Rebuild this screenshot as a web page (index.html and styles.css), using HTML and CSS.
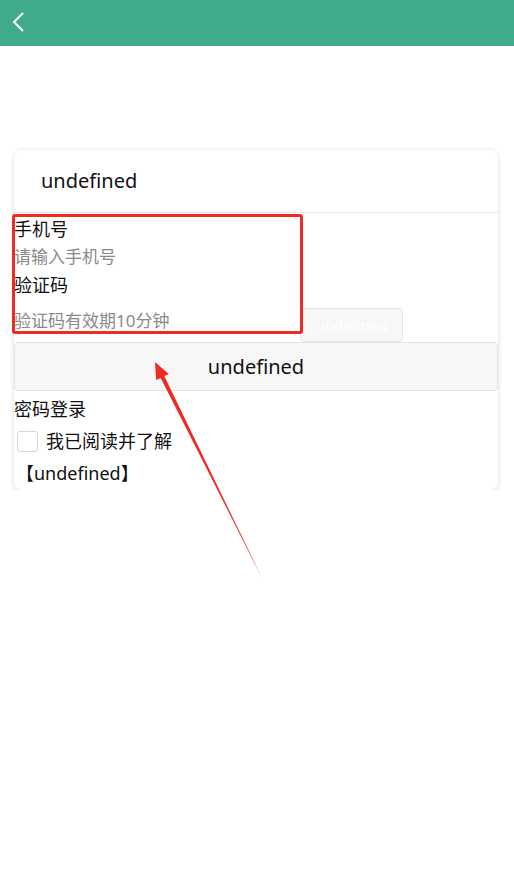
FILE: index.html
```html
<!DOCTYPE html>
<html lang="zh">
<head>
    <meta charset="UTF-8">
    <meta name="viewport" content="width=device-width, initial-scale=1.0">
    <title>登录</title>
    <link rel="stylesheet" href="styles.css">
</head>
<body>
    <div class="header">
        <svg class="back" width="16" height="22" viewBox="0 0 16 22">
            <polyline points="11,2 2,11 11,20" fill="none" stroke="#fff" stroke-width="2" />
        </svg>
    </div>
    <div class="card">
        <div class="card-title">undefined</div>
        <div class="label">手机号</div>
        <div class="input">请输入手机号</div>
        <div class="label">验证码</div>
        <div class="code-row">
            <div class="input code-input">验证码有效期10分钟</div>
            <button class="code-btn" type="button">undefined</button>
        </div>
        <button class="main-btn" type="button">undefined</button>
        <div class="link">密码登录</div>
        <div class="agree">
            <span class="check"></span>
            <span>我已阅读并了解</span>
        </div>
        <div class="terms">【undefined】</div>
    </div>
    <div class="mark"></div>
    <svg class="arrow" width="514" height="894" viewBox="0 0 514 894">
        <polygon points="155,362 168.8,373.9 164.3,376.1 262,578 160.7,377.9 156.2,380.1" fill="#ee2a22" />
    </svg>
</body>
</html>
```

FILE: styles.css
```css
body { margin: 0; background: #fff; color: #111; font-family: "Noto Sans", "Noto Sans CJK SC", sans-serif; }
.header { height: 46px; background: #40aa8c; display: flex; align-items: center; padding-left: 12px; }
.back { display: block; margin-top: -2px; }
.card { margin: 104px 16px 0 14px; background: #fff; border-radius: 8px; box-shadow: 0 1px 5px rgba(0, 0, 0, 0.16); padding-bottom: 4px; }
.card-title { height: 62px; line-height: 62px; padding-left: 27px; font-size: 20px; border-bottom: 1px solid #e6e6e6; }
.label { font-size: 18px; line-height: 28px; }
.card-title + .label { margin-top: 2px; }
.input { font-size: 17px; line-height: 28px; color: #8a8a8a; }
.code-row { display: flex; align-items: flex-start; padding-top: 8px; }
.code-input { width: 286px; }
.code-btn { margin-top: 1px; width: 103px; height: 34px; background: #f7f7f7; border: 1px solid #e6e6e6; border-radius: 4px; color: #fff; font-family: inherit; font-size: 15px; padding: 0; }
.main-btn { display: block; width: 100%; height: 49px; background: #f7f7f7; border: 1px solid #e3e3e3; border-radius: 4px; font-family: inherit; font-size: 20px; color: #111; padding: 0; }
.link { font-size: 18px; line-height: 26px; margin-top: 5px; }
.agree { display: flex; align-items: center; gap: 8px; padding-left: 3px; font-size: 18px; line-height: 26px; margin-top: 6px; }
.check { width: 19px; height: 19px; border: 1px solid #d6d6d6; border-radius: 3px; }
.terms { font-size: 18px; line-height: 26px; margin-top: 6px; padding-left: 2px; }
.mark { position: absolute; left: 12px; top: 214px; width: 285px; height: 114px; border: 3px solid #ee2a22; border-radius: 3px; }
.arrow { position: absolute; left: 0; top: 0; pointer-events: none; }
```
